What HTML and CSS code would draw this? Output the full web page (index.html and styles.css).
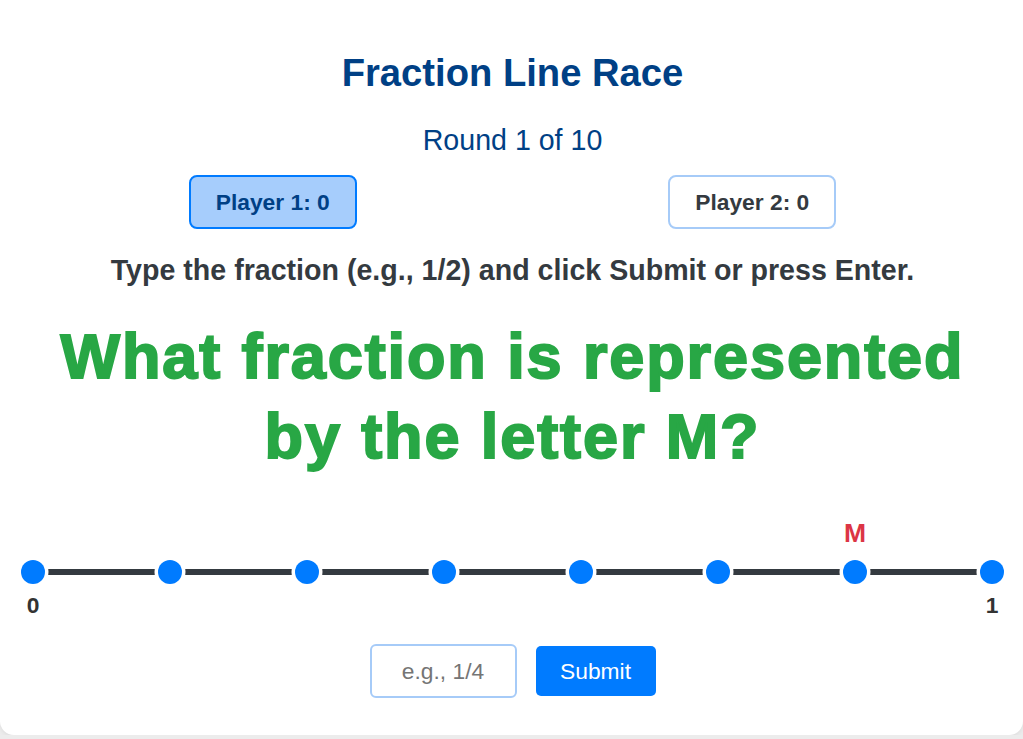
FILE: index.html
```html
<!DOCTYPE html>
<html lang="en">
<head>
<meta charset="utf-8">
<title>Fraction Line Race</title>
<link rel="stylesheet" href="styles.css">
</head>
<body>
<main class="card">
  <h1 class="title">Fraction Line Race</h1>
  <div class="round">Round 1 of 10</div>
  <div class="players">
    <div class="player active">Player 1: 0</div>
    <div class="player">Player 2: 0</div>
  </div>
  <p class="instructions">Type the fraction (e.g., 1/2) and click Submit or press Enter.</p>
  <h2 class="question">What fraction is represented<br>by the letter M?</h2>
  <div class="numberline">
    <div class="track"></div>
    <span class="dot" style="left:0%"></span>
    <span class="dot" style="left:14.2857%"></span>
    <span class="dot" style="left:28.5714%"></span>
    <span class="dot" style="left:42.8571%"></span>
    <span class="dot" style="left:57.1429%"></span>
    <span class="dot" style="left:71.4286%"></span>
    <span class="dot" style="left:85.7143%"></span>
    <span class="dot" style="left:100%"></span>
    <span class="marker" style="left:85.7143%">M</span>
    <span class="endlabel" style="left:0%">0</span>
    <span class="endlabel" style="left:100%">1</span>
  </div>
  <div class="answer">
    <input class="answer-input" type="text" placeholder="e.g., 1/4">
    <button class="submit" type="button">Submit</button>
  </div>
</main>
</body>
</html>
```
FILE: styles.css
```css
html, body {
  margin: 0;
  padding: 0;
}
body {
  background: #ececec;
  font-family: "Liberation Sans", Arial, sans-serif;
  color: #333333;
}
.card {
  box-sizing: border-box;
  width: 1023px;
  height: 735px;
  background: #ffffff;
  border-radius: 0 0 14px 14px;
  box-shadow: 0 2px 4px rgba(0, 0, 0, 0.06);
  padding: 51px 31px 0 33px;
  display: flex;
  flex-direction: column;
  align-items: stretch;
}
.title {
  margin: 0;
  font-size: 38.2px;
  line-height: 44px;
  font-weight: 700;
  color: #004085;
  text-align: center;
}
.round {
  margin-top: 29px;
  font-size: 28.6px;
  line-height: 33px;
  color: #004085;
  text-align: center;
}
.players {
  margin-top: 18px;
  display: flex;
  justify-content: space-around;
}
.player {
  box-sizing: border-box;
  width: 168px;
  height: 54px;
  display: flex;
  align-items: center;
  justify-content: center;
  border: 2px solid #a6cbf8;
  border-radius: 8px;
  background: #ffffff;
  font-size: 22.8px;
  font-weight: 700;
  color: #343a40;
}
.player.active {
  background: #a6cdfc;
  border-color: #007bff;
  color: #004085;
}
.instructions {
  margin: 25px 0 0;
  font-size: 28.6px;
  line-height: 32px;
  font-weight: 700;
  color: #343a40;
  text-align: center;
}
.question {
  margin: 30px 0 0;
  font-size: 63px;
  line-height: 80px;
  font-weight: 700;
  letter-spacing: 1.9px;
  color: #28a745;
  -webkit-text-stroke: 2px #28a745;
  text-align: center;
}
.numberline {
  position: relative;
  margin-top: 24px;
  height: 120px;
}
.track {
  position: absolute;
  left: 0;
  right: 0;
  top: 69px;
  height: 6px;
  background: #343a40;
}
.dot {
  position: absolute;
  top: 72px;
  width: 24px;
  height: 24px;
  border-radius: 50%;
  background: #007bff;
  box-shadow: 0 0 0 3.5px #ffffff;
  transform: translate(-50%, -50%);
}
.marker {
  position: absolute;
  top: 18px;
  transform: translateX(-50%);
  font-size: 26.5px;
  line-height: 30px;
  font-weight: 700;
  color: #dc3545;
}
.endlabel {
  position: absolute;
  top: 92px;
  transform: translateX(-50%);
  font-size: 22.8px;
  line-height: 26px;
  font-weight: 700;
  color: #333333;
}
.answer {
  margin-top: 24px;
  display: flex;
  justify-content: center;
  align-items: center;
  gap: 19px;
}
.answer-input {
  box-sizing: border-box;
  width: 147px;
  height: 54px;
  border: 2px solid #a6cbf8;
  border-radius: 6px;
  background: #ffffff;
  font-family: "Liberation Sans", Arial, sans-serif;
  font-size: 22.8px;
  text-align: center;
  color: #333333;
  padding: 0 8px;
  outline: none;
}
.answer-input::placeholder {
  color: #757575;
}
.submit {
  box-sizing: border-box;
  width: 120px;
  height: 50px;
  border: none;
  border-radius: 5px;
  background: #007bff;
  color: #ffffff;
  font-family: "Liberation Sans", Arial, sans-serif;
  font-size: 22.8px;
  cursor: pointer;
}
```
